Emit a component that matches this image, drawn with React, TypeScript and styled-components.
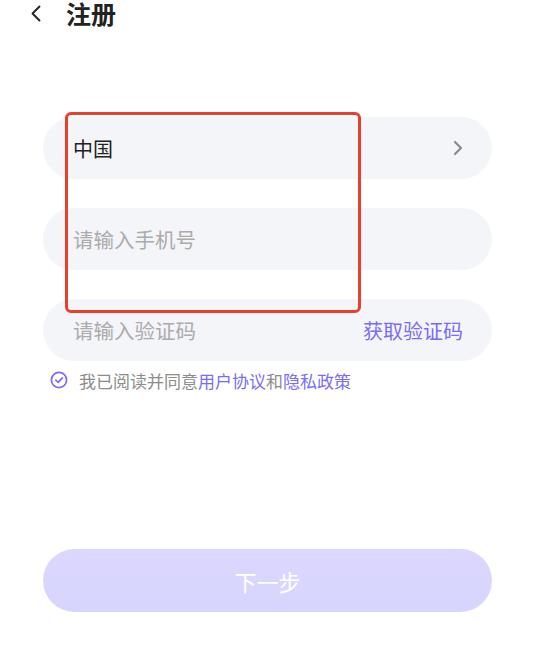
import React from 'react';
import styled, { createGlobalStyle } from 'styled-components';

const GlobalStyle = createGlobalStyle`
  html, body {
    margin: 0;
    padding: 0;
    background: #fff;
    font-family: 'Noto Sans CJK SC', 'Noto Sans', sans-serif;
  }
  * { box-sizing: border-box; }
`;

const App = () => {
  return (
    <>
      <GlobalStyle />
      <Root>
        <Header>
          <BackButton aria-label="返回">
            <svg width="12" height="17" viewBox="0 0 12 17" fill="none">
              <polyline
                points="9.5,1.5 2.5,8.5 9.5,15.5"
                stroke="#222"
                strokeWidth="1.9"
                strokeLinecap="round"
                strokeLinejoin="round"
              />
            </svg>
          </BackButton>
          <Title>注册</Title>
        </Header>

        <Form>
          <Field>
            <FieldValue>中国</FieldValue>
            <svg width="10" height="16" viewBox="0 0 10 16" fill="none">
              <polyline
                points="2,2 8,8 2,14"
                stroke="#8a8a8a"
                strokeWidth="2.2"
                strokeLinecap="round"
                strokeLinejoin="round"
              />
            </svg>
          </Field>
          <Field>
            <FieldInput placeholder="请输入手机号" />
          </Field>
          <Field>
            <FieldInput placeholder="请输入验证码" />
            <CodeButton>获取验证码</CodeButton>
          </Field>
        </Form>

        <Agreement>
          <svg width="18" height="18" viewBox="0 0 18 18" fill="none">
            <circle cx="9" cy="9" r="7.6" stroke="#7b6cf6" strokeWidth="1.7" />
            <polyline
              points="5.8,9.2 8.2,11.4 12.3,6.9"
              stroke="#7b6cf6"
              strokeWidth="1.7"
              strokeLinecap="round"
              strokeLinejoin="round"
            />
          </svg>
          <AgreementText>
            我已阅读并同意<Link>用户协议</Link>和<Link>隐私政策</Link>
          </AgreementText>
        </Agreement>

        <NextButton disabled>下一步</NextButton>

        <Highlight />
      </Root>
    </>
  );
};

export default App;

const Root = styled.div`
  position: relative;
  width: 535px;
  height: 672px;
  padding: 0 43px;
  display: flex;
  flex-direction: column;
`;
const Header = styled.div`
  display: flex;
  align-items: center;
  height: 26px;
  margin-left: -13px;
  gap: 24px;
`;
const BackButton = styled.button`
  border: none;
  background: none;
  padding: 0;
  display: flex;
  align-items: center;
  cursor: pointer;
`;
const Title = styled.h1`
  margin: 0;
  font-size: 25px;
  line-height: 26px;
  font-weight: 700;
  color: #222;
`;
const Form = styled.div`
  display: flex;
  flex-direction: column;
  gap: 29px;
  margin-top: 91px;
`;
const Field = styled.div`
  height: 62px;
  border-radius: 31px;
  background: #f4f5f9;
  padding: 0 29px 0 30px;
  display: flex;
  align-items: center;
  justify-content: space-between;
`;
const FieldValue = styled.span`
  font-size: 20px;
  color: #222;
`;
const FieldInput = styled.input`
  flex: 1;
  min-width: 0;
  border: none;
  outline: none;
  background: transparent;
  padding: 0;
  font-family: inherit;
  font-size: 20.5px;
  color: #222;
  &::placeholder {
    color: #ababab;
  }
`;
const CodeButton = styled.span`
  font-size: 20px;
  color: #7b6cf6;
  cursor: pointer;
`;
const Agreement = styled.div`
  display: flex;
  align-items: center;
  gap: 11px;
  margin-top: 9px;
  padding-left: 7px;
  height: 20px;
`;
const AgreementText = styled.span`
  font-size: 17px;
  color: #8c8c8c;
`;
const Link = styled.span`
  color: #7b6cf6;
`;
const NextButton = styled.button`
  margin-top: 159px;
  height: 63px;
  border: none;
  border-radius: 32px;
  background: linear-gradient(180deg, #dcd7fe 0%, #d6d5fe 100%);
  color: #fff;
  font-family: inherit;
  font-size: 22px;
`;
const Highlight = styled.div`
  position: absolute;
  left: 65px;
  top: 112px;
  width: 296px;
  height: 201px;
  border: 3px solid #e8402b;
  border-radius: 6px;
  pointer-events: none;
`;
